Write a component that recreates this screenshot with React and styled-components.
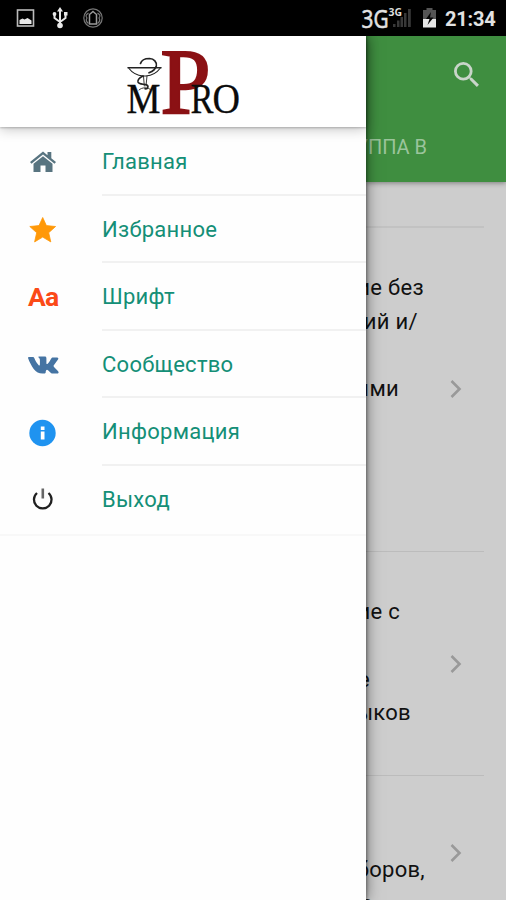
import React from "react";
import styled, { createGlobalStyle } from "styled-components";

const Global = createGlobalStyle`
  * { box-sizing: border-box; }
  body { margin: 0; background: #cdcdcd; font-family: Roboto, "Noto Sans", sans-serif; }
  svg { display: block; flex: none; overflow: visible; }
`;

const Screen = styled.div`
  width: 506px;
  height: 900px;
  display: flex;
  flex-direction: column;
  overflow: hidden;
`;
const StatusBar = styled.header`
  height: 36px;
  flex: none;
  display: flex;
  justify-content: space-between;
  background: #000;
`;
const Clock = styled.time`
  width: 61px;
  color: #e2e2e2;
  font-size: 20px;
  font-weight: 700;
  line-height: 38px;
  letter-spacing: -0.2px;
`;
const StatusGroup = styled.div`
  display: flex;
`;
const Body = styled.div`
  flex: 1;
  min-height: 0;
  display: flex;
`;
const Drawer = styled.aside`
  width: 366px;
  flex: none;
  position: relative;
  z-index: 2;
  background: #fefefe;
  box-shadow: 0 0 14px rgba(0, 0, 0, 0.5), 1px 0 3px rgba(0, 0, 0, 0.35);
  clip-path: inset(0 -30px 0 0);
`;
const Brand = styled.div`
  height: 91px;
  background: #fff;
  position: relative;
  box-shadow: 0 1px 2px rgba(0, 0, 0, 0.22), 0 2px 12px rgba(0, 0, 0, 0.24);
`;
const Menu = styled.nav`
  display: flex;
  flex-direction: column;
  padding-top: 1px;
  border-bottom: 2px solid #f8f8f8;
`;
const MenuItem = styled.a`
  height: 67.6px;
  display: flex;
  align-items: stretch;
`;
const IconSlot = styled.span`
  width: 102px;
  padding-left: 28px;
  flex: none;
  display: flex;
  align-items: center;
  padding-top: 1px;
`;
const Label = styled.span`
  flex: 1;
  color: #148f77;
  font-size: 22px;
  line-height: 67px;
  letter-spacing: 0.28px;
  border-bottom: 2px solid ${(p) => (p.$last ? "transparent" : "#f1f1f1")};
`;
const FontGlyph = styled.b`
  color: #fb4a17;
  font-size: 26.5px;
  line-height: 28px;
  letter-spacing: -0.7px;
`;
const Page = styled.main`
  flex: 1;
  min-width: 0;
  overflow: hidden;
  display: flex;
  flex-direction: column;
  background: #cdcdcd;
`;
const AppBar = styled.div`
  height: 146px;
  flex: none;
  display: flex;
  flex-direction: column;
  justify-content: space-between;
  background: #3f8e40;
  position: relative;
  box-shadow: 0 1px 5px rgba(0, 0, 0, 0.4);
`;
const Toolbar = styled.div`
  display: flex;
  justify-content: flex-end;
  padding: 26px 27px 0 0;
`;
const Line = styled.div`
  width: ${(p) => p.$right}px;
  height: 33.75px;
  display: flex;
  justify-content: flex-end;
  white-space: nowrap;
  color: #111;
  font-size: 22px;
  line-height: 33.75px;
  letter-spacing: 0.3px;
`;
const TabLabel = styled(Line)`
  color: #9bc49c;
  font-size: 20px;
  height: 51px;
  letter-spacing: 0;
`;
const Spacer = styled.div`
  height: 46px;
  flex: none;
  width: 118px;
  border-bottom: 2px solid #c2c2c2;
`;
const Entry = styled.article`
  height: ${(p) => p.$height}px;
  width: 118px;
  flex: none;
  display: flex;
  border-bottom: 1px solid #bcbcbc;
`;
const Lines = styled.div`
  width: 60px;
  padding-top: 43px;
  flex: none;
`;
const ChevronSlot = styled.div`
  padding: ${(p) => p.$top}px 0 0 24px;
`;

const Chevron = () => (
  <svg width="12" height="18" viewBox="0 0 12 18" fill="none" stroke="#999" strokeWidth="2.6">
    <path d="M1.500 1l8 8-8 8" />
  </svg>
);

const Logo = () => (
  <svg width="366" height="91" viewBox="0 0 366 91" fontFamily="Liberation Serif, serif">
    <text x="160.500" y="76.500" fontSize="94" fill="#8b1114" stroke="#8b1114" strokeWidth="2.200" textLength="50" lengthAdjust="spacingAndGlyphs">P</text>
    <g fill="#0b0b0b" stroke="#0b0b0b" strokeWidth=".3">
      <text x="126.500" y="77" fontSize="43" textLength="34" lengthAdjust="spacingAndGlyphs">M</text>
      <text x="190.500" y="77" fontSize="43" textLength="23" lengthAdjust="spacingAndGlyphs">R</text>
      <text x="212.500" y="77" fontSize="43" textLength="27.500" lengthAdjust="spacingAndGlyphs">O</text>
    </g>
    <g fill="none" stroke="#222" strokeWidth="1.100" strokeLinecap="round">
      <path d="M128 31.700h33" strokeWidth="1.500" />
      <path d="M129 32.500c3 4 8 7 14 7.500h3c6-.5 11-3.500 14-7.500" />
      <path d="M140.500 27.500c1-3.500 5-5 9-5 4.500.3 7.500 3.500 6.800 7.500-.8 3.500-4 5.500-7.300 6.800" strokeWidth="1.700" />
      <path d="M143 40c-3 1.500-5.500 3.500-5 6 .8 2.800 6 1.700 8.500 2.800 2.500 1.300 1.500 4.500-1.500 4" strokeWidth="1.600" />
      <path d="M143.500 40l.8 10M147 40l-1 10M139 54c3-3 9-3 12 0" strokeWidth=".9" />
    </g>
  </svg>
);

const LeftStatus = () => (
  <svg width="110" height="36" viewBox="0 0 110 36" fill="none">
    <rect x="17.500" y="10" width="16" height="16" stroke="#bbb" strokeWidth="1.600" />
    <path d="M19.500 24v-4l3-1.500 2 1 3-1.500 4 2.500V24z" fill="#e8e8e8" />
    <g stroke="#e8e8e8" strokeWidth="2">
      <path d="M60 10v15M54.500 14v4l5.500 4M65.500 14v4L60 22" />
    </g>
    <g fill="#e8e8e8">
      <path d="M60 7l3 4.500h-6zM64 12h3.500v3.500H64z" />
      <circle cx="54.500" cy="14" r="1.900" /><circle cx="60" cy="25.500" r="2.800" />
    </g>
    <g stroke="#777" strokeWidth="1.200">
      <circle cx="93" cy="18" r="9.200" />
      <path d="M93 11.500l3.500 3V24h-7v-9.500z" stroke="#999" strokeWidth="1.500" />
      <path d="M88.500 13c-3 2-3 3-1.500 5-1.500 2-1 3.500 1.500 5.500M97.500 13c3 2 3 3 1.500 5 1.500 2 1 3.500-1.500 5.500" />
    </g>
  </svg>
);

const RightStatus = () => (
  <svg width="84" height="36" viewBox="361 0 84 36" fontFamily="Open Sans, Noto Sans, sans-serif">
    <text x="361.500" y="27.500" fontSize="25" fill="#e2e2e2" stroke="#e2e2e2" strokeWidth=".6" textLength="27" lengthAdjust="spacingAndGlyphs">3G</text>
    <g fill="#383838">
      <path d="M393 24h2.500v3H393zM397 20.500h2.500V27H397zM400.500 17h2.500v10h-2.500zM404 13h2.500v14H404zM408 9h2.800v18H408z" />
    </g>
    <text x="388.500" y="16" fontSize="11" fontWeight="700" fill="#ddd" textLength="13.500" lengthAdjust="spacingAndGlyphs">3G</text>
    <path d="M423 10h3.500V8h6v2h3.500v9h-13z" fill="#555" />
    <path d="M423 19h13v8.500h-13z" fill="#e6e6e6" />
    <path d="M431 12l-5 7h3.500l-2 6 6-7.500H430z" fill="#050505" />
  </svg>
);

const SearchIcon = () => (
  <svg width="25" height="25" viewBox="3 3 17.500 17.500" fill="#c9d5c9">
    <path d="M15.500 14h-.79l-.28-.27A6.470 6.470 0 0 0 16 9.500 6.500 6.500 0 1 0 9.500 16c1.610 0 3.090-.59 4.230-1.570l.27.28v.79l5 4.990L20.490 19l-4.990-5zm-6 0C7.010 14 5 11.990 5 9.500S7.010 5 9.500 5 14 7.010 14 9.500 11.990 14 9.500 14z" />
  </svg>
);

const HomeIcon = () => (
  <svg width="30" height="26" viewBox="0 0 30 26" fill="#587480">
    <path d="M2 13L15 2.500l4.500 3.700V3h3.800v6.200L28 13l-1.500 1.700L15 5.500 3.500 14.700z" />
    <path d="M15 7.200l9.500 7.600V23H17.500v-6.500h-5V23h-7v-8.200z" />
  </svg>
);
const StarIcon = () => (
  <svg width="30" height="28" viewBox="0 0 30 28" fill="#ff9808" stroke="#ff9808" strokeWidth=".8" strokeLinejoin="round">
    <path d="M14.700 1.500l3.700 8.100 9.200.9-6.900 6.200 2.100 9.200-8.100-4.800-8.100 4.800 2.100-9.200-6.900-6.200 9.200-.9z" />
  </svg>
);
const VkIcon = () => (
  <svg width="31" height="18" viewBox="0 0 31 18" fill="#4574a3">
    <path d="M14.500 17.500h2.200c.7 0 1-.5 1-1.200 0-2 1-3.300 2.600-1.800l1.800 1.800c.8.800 1.500 1.200 2.600 1.200h4.100c2 0 2.400-1.200 1.100-2.600l-3.900-4c-.6-.7-.6-1 0-1.800l4-5.700c.7-1.200.3-2-1-2h-4c-.9 0-1.400.4-1.800 1.200-1.300 2.500-2.400 4.600-3.800 5.300-.9.3-1-.2-1-1.200V2.300c0-1.200-.5-1.700-1.700-1.700h-5.600c-.8 0-1 .7-.3 1.200.8.600 1.100 1.100 1.100 2.500v4.100c0 1.200-.7 1.300-1.400.5C8.900 7.200 7.400 4.700 6.500 2.400 6 1.300 5.500 1 4.600 1H1.100C.2 1-.2 1.500.2 2.600c1.300 3.500 3.200 7.300 5.500 10.400 2.400 3.200 5.200 4.500 8.800 4.500z" />
  </svg>
);
const InfoIcon = () => (
  <svg width="29" height="28" viewBox="0 0 29 28">
    <circle cx="14.500" cy="14" r="13.200" fill="#1f93f0" />
    <path d="M12.800 7.500h3.700V11h-3.700zM12.800 12.500h3.700v8h-3.700z" fill="#fff" />
  </svg>
);
const PowerIcon = () => (
  <svg width="30" height="26" viewBox="0 0 30 26" fill="none">
    <path d="M9 6a8.800 8.800 0 1 0 11.500 0" stroke="#202020" strokeWidth="2.300" />
    <path d="M14.800 1.500v10" stroke="#666" strokeWidth="2.600" />
  </svg>
);

const items = [
  { label: "Главная", icon: <HomeIcon /> },
  { label: "Избранное", icon: <StarIcon /> },
  { label: "Шрифт", icon: <FontGlyph>Aa</FontGlyph> },
  { label: "Сообщество", icon: <VkIcon /> },
  { label: "Информация", icon: <InfoIcon /> },
  { label: "Выход", icon: <PowerIcon /> },
];

const entries = [
  { height: 324, chevron: 152, lines: [["ние без", 58], ["ний и/", 52], ["", 0], ["ными", 33]] },
  { height: 224, chevron: 103, lines: [["ние с", 34], ["", 0], ["ие", 4], ["зыков", 45]] },
  { height: 180, chevron: 68, lines: [["", 0], ["иборов,", 59], ["е", 7]] },
];

export default function App() {
  return (
    <Screen>
      <Global />
      <StatusBar>
        <LeftStatus />
        <StatusGroup>
          <RightStatus />
          <Clock>21:34</Clock>
        </StatusGroup>
      </StatusBar>
      <Body>
        <Drawer>
          <Brand><Logo /></Brand>
          <Menu>
            {items.map((item, i) => (
              <MenuItem key={item.label}>
                <IconSlot>{item.icon}</IconSlot>
                <Label $last={i === items.length - 1}>{item.label}</Label>
              </MenuItem>
            ))}
          </Menu>
        </Drawer>
        <Page>
          <AppBar>
            <Toolbar><SearchIcon /></Toolbar>
            <TabLabel $right={61}>ГРУППА В</TabLabel>
          </AppBar>
          <Spacer />
          {entries.map((entry) => (
            <Entry key={entry.height} $height={entry.height}>
              <Lines>
                {entry.lines.map(([text, right], i) => (
                  <Line key={i} $right={right}>{text}</Line>
                ))}
              </Lines>
              <ChevronSlot $top={entry.chevron}><Chevron /></ChevronSlot>
            </Entry>
          ))}
        </Page>
      </Body>
    </Screen>
  );
}
